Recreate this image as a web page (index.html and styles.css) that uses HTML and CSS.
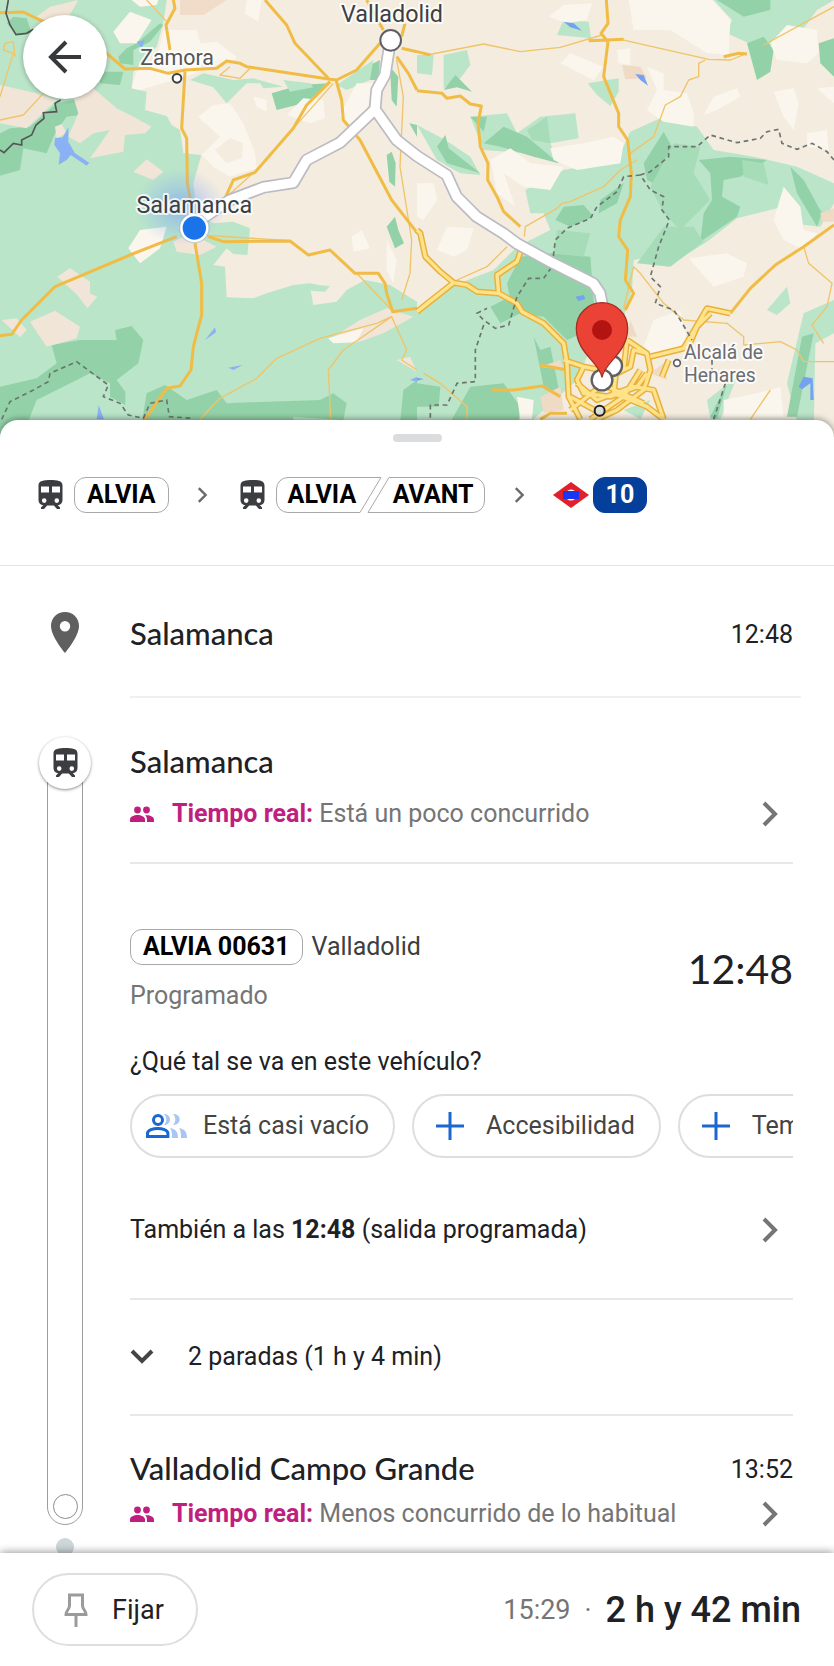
FILE: index.html
```html
<!DOCTYPE html>
<html lang="es">
<head>
<meta charset="utf-8">
<meta name="viewport" content="width=device-width, initial-scale=1">
<title>Salamanca – Ruta en transporte público</title>
<link rel="stylesheet" href="styles.css">
</head>
<body>
<svg class="defs" aria-hidden="true">
  <symbol id="train" viewBox="0 0 25 30">
    <path fill-rule="evenodd" d="M12.500 0C6 0 .5.500.500 5.500V20c0 3 2.200 5 4.800 5L3 27.500V29h3l3.200-3.500h6.600L19 29h3v-1.500L19.700 25c2.600 0 4.800-2 4.800-5V5.500C24.500.5 19 0 12.500 0zM3 6.500h8v6H3zm11 0h8v6h-8zM6.200 18.300a2.300 2.300 0 1 1 0 4.600 2.300 2.300 0 0 1 0-4.600zm12.600 0a2.300 2.300 0 1 1 0 4.600 2.300 2.300 0 0 1 0-4.600z"/>
  </symbol>
  <symbol id="people" viewBox="0 0 24 16">
    <circle cx="7.500" cy="4" r="3.400"/><circle cx="16.500" cy="4" r="3.400"/>
    <path d="M0 16v-2.500C0 10.500 4 9 7.500 9s7.500 1.500 7.500 4.500V16zM17 16v-2.500c0-1.800-.8-3.200-2-4.200 4-.7 9 1 9 4.200V16z"/>
  </symbol>
  <symbol id="chevron" viewBox="0 0 16 26"><path d="M2 2l11 11L2 24" fill="none" stroke="currentColor" stroke-width="4"/></symbol>
  <symbol id="plus" viewBox="0 0 28 28"><path d="M14 0v28M0 14h28" fill="none" stroke="currentColor" stroke-width="3"/></symbol>
</svg>

<div class="app">
  <header class="map">
    <svg class="map-art" viewBox="0 0 2502 1302" preserveAspectRatio="xMidYMin slice" role="img" aria-label="Mapa de la ruta">
      <defs>
        <radialGradient id="beam"><stop offset="0" stop-color="#7aa2f5" stop-opacity=".7"/><stop offset="1" stop-color="#8fb3f5" stop-opacity="0"/></radialGradient>
      </defs>
      <rect width="2502" height="1302" fill="#f3ecdf"/>
      <!-- west -->
      <g>
        <path fill="#bae5c9" d="M0 0H500L490 70 470 140 400 215 395 265 440 275 435 330 500 348 515 375 540 390 550 460 604 465 580 550 590 640 640 670 700 665 750 685 742 765 700 762 680 745 640 795 675 800 680 892 760 895 800 880 880 855 930 850 960 856 990 858 975 875 932 872 940 915 1010 905 1040 870 1095 840 1170 855 1251 905V1302H0Z"/>
        <g fill="#93d2a8">
          <path d="M20 70 40 50 80 55 95 100 50 105ZM0 400 30 385 90 380 170 310 220 300 262 300 240 345 200 350 165 400 140 460 70 445 60 510 0 527ZM300 215 370 215 360 255 300 250ZM355 170 380 145 410 130 480 70 490 75 450 125 400 150 400 195 360 190ZM815 280 900 255 985 250 930 300 890 315 830 330ZM1160 465 1175 455 1187 490 1185 560 1168 545ZM1160 680 1185 650 1195 690 1212 730 1185 745ZM0 1160 110 1135 170 1090 155 1035 240 1020 350 1020 345 990 395 978 430 1020 415 1090 350 1140 376 1175 376 1215 330 1190 330 1150 270 1120 190 1160 110 1200 70 1302H0ZM440 1180 495 1155 560 1200 650 1170 680 1210 800 1205 960 1200 1000 1180 1040 1210 1030 1260 880 1250V1302H420ZM1170 200 1195 230 1190 320 1175 300ZM1100 200 1140 180 1135 240 1100 240ZM1210 1170 1251 1140V1270H1200ZM1228 370 1251 375V410Z"/>
        </g>
        <path fill="#bae5c9" d="M610 220 700 240 760 235 850 260 790 265 780 250 740 250 680 310 640 262 570 240ZM1010 255 1120 180 1110 240 1040 270ZM850 240 930 250 940 262 870 275Z"/>
        <g fill="#f1e5d8">
          <path d="M165 380 185 372 200 400 170 415ZM215 275 275 260 310 290 350 325 400 350 455 380 435 400 375 405 370 455 270 475 330 390 280 400 240 430 205 410 235 340ZM0 255 110 280 170 300 80 385 0 370ZM400 515 440 478 490 515 460 540ZM172 830 210 805 270 845 270 880 292 890 262 925 232 885ZM5 960 50 955 80 990 60 1012ZM90 965 165 932 240 980 230 1015 140 1040ZM110 50 150 20 235 0 200 60 160 70ZM520 725 570 700 650 740 600 765 530 755ZM1080 960 1160 925 1240 950 1150 1000 1080 1025 985 1020ZM1190 1080 1230 1070 1251 1115Z"/>
          <path fill="#f0dcc8" d="M540 0H680L610 45 540 45Z"/>
        </g>
        <g fill="#faf6ee">
          <path d="M340 95 390 35 455 60 410 130 360 130ZM395 0H475L470 15 420 20ZM490 90 590 90 610 160 600 215 540 235 420 270 395 265 410 215 470 180ZM595 350 640 315 690 310 730 370 765 460 770 505 690 530 640 500 605 465 660 410ZM860 345 910 295 970 300 975 355 930 370ZM760 290 800 300 800 335 770 320ZM385 745 420 690 500 680 480 745 420 790ZM1020 345 1070 250 1130 250 1100 330 1040 380ZM740 0H785L775 65 735 40ZM1055 710 1085 690 1110 745 1060 755ZM1160 720 1190 780 1180 850 1160 810ZM600 130 650 125 710 170 700 185 620 200ZM985 1015 1090 985 1070 1027 1000 1030Z"/>
          <path fill="#f3ecdf" d="M645 450 690 415 730 430 725 475 680 490Z"/>
        </g>
        <g fill="#8bb1f5"><path d="M205 382 205 425 225 460 268 488 260 497 212 465 200 480 176 494 180 460 163 435 165 415 188 412ZM410 125 435 120 425 145ZM615 1020 645 982 648 997ZM685 1103 728 1095 700 1110ZM290 1258 296 1215 312 1258ZM1230 1140 1251 1130V1145Z"/></g>
        <g class="road-minor"><path d="M0 360 70 345 130 280M0 290 40 160 10 150 15 130 40 125 45 170M440 0 500 65M600 1258 660 1195 770 1135 830 1075 960 1015 1130 970 1175 950 1030 1050 985 1110 992 1258M1190 180 1210 290 1200 500 1235 720 1230 820 1205 900M1175 950 1220 1050 1205 1080 1251 1110M1070 820 1180 935M675 595 770 510M880 385 1000 250M690 200 660 225 720 235 750 205M600 705 870 722"/></g>
        <g class="road"><path d="M0 38 70 36 130 65 320 160 375 207 450 205 505 220 555 210 650 205 680 183 720 190 740 200 990 238 1010 240 1070 210 1140 130M520 0 525 25 498 75 510 150M555 215 545 385 560 415 562 550 580 650M795 0 860 75 885 130 985 235M990 245 920 315 880 385 765 517 700 540 675 595M1008 240 1025 300 1030 360 1080 420 1175 600 1251 698M0 1007 35 1003 65 960 165 860 390 765 530 710M585 730 605 850 605 945 580 1040 573 1110 540 1158 500 1165 435 1258M625 710 670 725 870 723 925 765 990 750 1065 820 1135 820 1155 850 1160 880 1178 935 1251 925M1190 170 1225 220 1251 270M1150 90 1100 0M1205 110 1215 70M1205 145 1251 155"/></g>
        <path class="frontier" d="M25 0 18 40 30 75 48 104 80 100 100 88M182 300 165 310 170 335 130 338 132 355 108 375 95 405 65 420 65 435 40 430 12 458 0 450"/>
        <path class="border" d="M5 1258 30 1205 100 1170 145 1145 150 1120 230 1085 325 1155 310 1190 360 1210 385 1245 430 1255 450 1210 500 1200 508 1250 580 1255"/>
      </g>
      <!-- east -->
      <g transform="translate(1251 0)">
        <g fill="#bae5c9">
          <path d="M890 0H1251L1200 30 1150 100 1060 140 995 130 930 100 945 60ZM420 105 440 60 515 65 522 115ZM0 165 50 165 45 225 0 220ZM80 165 150 150 160 195 130 235 80 265ZM512 250 605 235 605 275 580 318 540 285ZM160 350 270 340 300 400 370 350 475 340 485 415 400 430 425 490 330 460 200 450ZM0 375 85 420 160 470 190 525 130 520 60 480ZM325 570 440 510 600 480 640 395 740 350 840 380 890 450 1010 470 1140 500 1251 550V610L1210 680 1120 670 1125 610 1080 625 960 655 870 725 750 800 720 765 650 780 645 870 620 950 540 1000 480 1140 300 1302H0V940L100 860 230 810 300 740 400 690 380 640 340 640ZM1150 1302 1110 1150 1160 940 1251 900V1000L1195 1030 1190 1302ZM880 1258 870 1200 960 1130 910 1258ZM1050 930 1110 860 1120 910 1080 945ZM620 1230 700 1200 670 1258Z"/>
        </g>
        <g fill="#93d2a8">
          <path d="M80 270 115 225 165 275 120 262ZM160 350 210 350 200 395ZM200 430 260 380 330 410 425 490 350 470 250 440ZM60 440 85 405 95 445 190 520 90 490ZM680 490 740 395 770 450 820 500 760 530 740 565 690 540ZM845 480 940 470 1050 480 970 530 920 540 915 590 970 620 960 650 850 725 860 640 885 600 880 520ZM415 660 440 620 500 615 530 650 460 680ZM550 600 620 550 600 610 545 640ZM270 850 310 770 400 760 520 770 530 900 540 980 450 1020 380 950 300 940 280 900ZM220 920 280 890 310 940 250 970ZM900 0H1060V30L980 50ZM990 130 1040 110 1070 150 1060 215 1020 240ZM1205 130 1251 115V230L1210 190ZM1120 500 1160 540 1215 640 1200 680 1140 580ZM0 1150 70 1160 65 1220 0 1220ZM160 1160 260 1150 310 1220 300 1302H80ZM1155 1010 1190 1000 1140 1250H1110ZM350 1010 370 1050 400 1040 430 1190 380 1160ZM880 1250 930 1150 900 1258Z"/>
        </g>
        <path fill="#a7dcb8" d="M330 390 390 350 400 430 345 420ZM770 430 850 440 830 520 880 600 790 690 740 640 700 560ZM975 480 1040 490 1055 555 980 530ZM660 790 740 680 830 680 860 725 760 800ZM420 690 520 700 500 770 410 760Z"/>
        <g fill="#faf6ee">
          <path d="M395 50 440 15 525 10 510 60 450 70ZM635 0H885L940 60 935 165 870 160 760 90 650 90ZM1060 130 1110 75 1200 90 1205 160 1170 190 1080 180ZM430 190 460 160 560 200 530 240ZM600 150 640 145 640 195 605 190ZM690 200 740 220 740 270 810 280 830 340 830 380 740 365 690 330 720 270ZM860 345 890 290 960 265 970 290 900 330ZM1070 275 1130 265 1145 310 1130 390 1100 350ZM1170 400 1230 390 1235 450 1170 440ZM400 445 500 430 590 410 620 430 610 490 480 510 410 480ZM220 480 280 445 340 490 440 500 400 570 320 560 260 520 295 620 240 580ZM0 550 50 550 60 600 20 660 0 650ZM60 750 90 680 170 685 150 750 110 770ZM1070 660 1100 560 1150 620 1160 690 1200 700 1160 750 1100 720ZM815 775 930 760 990 790 980 830 890 860ZM680 1040 710 960 790 930 810 1020 770 1050 700 1060ZM1020 1180 1090 1160 1100 1250H920V1200ZM1200 265 1251 260V310ZM300 1190 350 1200 345 1258H310Z"/>
        </g>
        <g fill="#efdac5"><path d="M615 195 670 200 690 235 625 238ZM1210 640 1251 625V665L1215 665ZM370 1190 430 1160 440 1230 380 1240ZM640 960 660 1010 630 1010ZM370 1100 430 1080 440 1110ZM700 1120 740 1090 750 1140Z"/></g>
        <g fill="#76a1f1"><path d="M440 65 470 70 495 92 460 82ZM655 222 680 225 693 257 670 240ZM475 890 500 885 505 897 485 903ZM1145 1160 1160 1130 1187 1135 1190 1200 1180 1200 1180 1150 1155 1168ZM0 1133 20 1137 0 1142Z"/></g>
        <g class="road-minor"><path d="M30 165 200 132 310 155 430 142 555 105M610 118 875 178 940 180 990 160M1040 135 1251 20M865 180 845 190 845 230 815 240 790 290 745 315 710 410 640 460M660 480 610 510 560 560 460 605 435 610 420 625 325 680 322 710M270 740 210 800 120 840M620 925 650 800 670 820 740 910 800 960 930 970 980 1010 980 1035M980 1035 1090 1025 1140 1050 1160 1085 1251 1085M1160 740 1175 790 1245 850 1230 920 1185 975 1220 1030M1060 1170 1000 1258M20 1120 70 1150 150 1220 150 1258"/></g>
        <g class="road"><path d="M0 155 40 165M568 0 573 70 552 100 573 125 560 230 605 340 605 380 632 420 643 520 640 590 610 660 605 710 632 750 625 840 650 880 625 930M0 272 75 280 90 295 130 288 160 312 193 318 183 370 190 440 213 490 212 540 240 590 260 635 310 680M515 122 620 118M1251 675 1160 740 1075 795 1000 865 940 940M225 1170 290 1170 375 1158 430 1190M370 1258 400 1240 450 1240M730 1060 745 1060M370 1095 450 1110M920 170 965 160 990 162"/></g>
        <g class="highway">
          <path d="M0 690 10 700 25 770 70 815 110 848 150 855 180 875 245 880 300 910 315 935 380 970 440 1030 450 1090 455 1190 490 1258M0 935 110 848M245 880 240 825 300 785 312 750M440 1080 500 1100 550 1110 620 1110 630 1020M700 1070 800 1045 870 925 940 940M810 1050 840 980 880 940M735 1130 755 1080M630 1020 690 1060 700 1110 680 1170 600 1230 540 1258M460 1230 600 1120 640 1100 650 1050 690 1060M480 1150 540 1200 650 1160 710 1170 740 1258M500 1100 480 1140 500 1180 580 1190 660 1160 690 1120M520 1258 620 1190 670 1110M460 1190 560 1245M600 1090 590 1180 690 1220 740 1258M550 1150 680 1210"/>
        </g>
        <g class="highway-fill">
          <path d="M0 690 10 700 25 770 70 815 110 848 150 855 180 875 245 880 300 910 315 935 380 970 440 1030 450 1090 455 1190 490 1258M0 935 110 848M245 880 240 825 300 785 312 750M440 1080 500 1100 550 1110 620 1110 630 1020M700 1070 800 1045 870 925 940 940M810 1050 840 980 880 940M735 1130 755 1080M630 1020 690 1060 700 1110 680 1170 600 1230 540 1258M460 1230 600 1120 640 1100 650 1050 690 1060M480 1150 540 1200 650 1160 710 1170 740 1258M500 1100 480 1140 500 1180 580 1190 660 1160 690 1120M520 1258 620 1190 670 1110M460 1190 560 1245M600 1090 590 1180 690 1220 740 1258M550 1150 680 1210"/>
        </g>
        <path class="border" d="M1251 480 1230 455 1185 430 1140 448 1095 430 1085 388 1050 395 1030 415 960 428 880 405 840 440 755 440 755 470 700 515 670 525 700 570 740 590 735 630 757 660 725 740 700 830 730 860 715 910 770 930 790 960 825 1020M670 525 620 530 600 575 540 620 520 655 450 685 415 720 405 800 380 835 335 835 300 890 275 975 235 985 200 960 180 940 210 925M200 975 175 1050 175 1145 120 1150 90 1215 40 1215 40 1258M885 1080V1115M925 1150 890 1258"/>
      </g>
      <ellipse cx="540" cy="620" rx="135" ry="115" fill="url(#beam)"/>
      <g class="route-edge"><path d="M600 660 690 600 790 562 880 548 920 480 1020 428 1125 328 1130 270 1155 225 1170 130M1125 328 1190 420 1251 468 1340 525 1370 590 1430 650 1510 700 1550 730 1650 785 1730 825 1780 850 1800 880 1810 930"/></g>
      <g class="route-line"><path d="M600 660 690 600 790 562 880 548 920 480 1020 428 1125 328 1130 270 1155 225 1170 130M1125 328 1190 420 1251 468 1340 525 1370 590 1430 650 1510 700 1550 730 1650 785 1730 825 1780 850 1800 880 1810 930"/></g>
      <g fill="#fff" stroke="#5f6063">
        <circle cx="1172" cy="121" r="31" stroke-width="6"/>
        <circle cx="531" cy="235" r="13" stroke="#3c4043" stroke-width="6"/>
        <circle cx="1836" cy="1098" r="30" stroke-width="7"/>
        <circle cx="1806" cy="1140" r="31" stroke-width="7"/>
        <circle cx="1799" cy="1232" r="15" fill="#ddd" stroke="#222" stroke-width="6"/>
        <circle cx="2031" cy="1089" r="10" stroke-width="5"/>
      </g>
      <circle cx="583" cy="684" r="44" fill="#fff" stroke="#7c98b8" stroke-opacity=".4" stroke-width="4"/>
      <circle cx="583" cy="684" r="35" fill="#1a73e8"/>
      <path fill="#ea4335" stroke="#a92c20" stroke-width="4" d="M1806 1132C1798 1085 1729 1060 1729 985A77 77 0 0 1 1883 985C1883 1060 1814 1085 1806 1132Z"/>
      <circle cx="1806" cy="990" r="30" fill="#b31412"/>
      <g class="place">
        <text x="1176" y="67" class="place-city">Valladolid</text>
        <text x="531" y="194" class="place-town">Zamora</text>
        <text x="583" y="638" class="place-city">Salamanca</text>
        <text x="2052" y="1078" class="place-suburb">Alcalá de</text>
        <text x="2052" y="1147" class="place-suburb">Henares</text>
      </g>
    </svg>
    <button class="back" type="button" aria-label="Atrás">
      <svg viewBox="0 0 34 34" width="34" height="34"><path d="M33 17H3M18 2 3 17l15 15" fill="none" stroke="#37393c" stroke-width="4"/></svg>
    </button>
  </header>

  <main class="sheet">
    <div class="summary">
      <span class="handle"></span>
      <div class="legs">
        <span class="leg-item"><svg class="train"><use href="#train"/></svg><b class="line">ALVIA</b></span>
        <svg class="sep"><use href="#chevron"/></svg>
        <span class="leg-item">
          <svg class="train"><use href="#train"/></svg>
          <span class="pair">
            <svg class="pair-frame" viewBox="0 0 210 36" aria-hidden="true"><path d="M12 .5H105L84 35.500H12A11.500 11.500 0 0 1 .5 24V12A11.500 11.500 0 0 1 12 .5ZM113 .5H197A11.500 11.500 0 0 1 208.500 12V24A11.500 11.500 0 0 1 197 35.500H92Z" fill="#fff" stroke="#a8a8a8"/></svg>
            <b>ALVIA</b><b>AVANT</b>
          </span>
        </span>
        <svg class="sep"><use href="#chevron"/></svg>
        <span class="leg-item metro">
          <svg viewBox="0 0 36 26" width="36" height="26" role="img" aria-label="Metro"><path fill="#e0202b" d="M18 0 36 13 18 26 0 13z"/><circle cx="18" cy="13" r="5.500" fill="#fff"/><path fill="#1738f0" d="M10 9h16v8H10z"/></svg>
          <b class="line line-10">10</b>
        </span>
      </div>
    </div>

    <div class="itinerary">
      <section class="step origin">
        <div class="gutter"><svg viewBox="0 0 28 41" width="28" height="41"><path fill="#5f5f5f" fill-rule="evenodd" d="M14 0C6 0 0 6 0 14c0 10.500 14 27 14 27s14-16.500 14-27C28 6 22 0 14 0zm0 9a5.200 5.200 0 1 1 0 10.400A5.200 5.200 0 0 1 14 9z"/></svg></div>
        <div class="row origin-row"><h2>Salamanca</h2><time>12:48</time></div>
      </section>

      <section class="step ride">
        <div class="gutter rail">
          <span class="rail-badge"><svg class="train"><use href="#train"/></svg></span>
          <span class="rail-tube"><i class="rail-stop"></i></span>
        </div>
        <div class="details">
          <div class="board divided">
            <h2>Salamanca</h2>
            <button class="row live" type="button">
              <svg class="people"><use href="#people"/></svg>
              <span class="grow"><b>Tiempo real:</b> Está un poco concurrido</span>
              <svg class="go"><use href="#chevron"/></svg>
            </button>
          </div>
          <div class="service divided">
            <div class="row departure">
              <div class="grow">
                <p class="vehicle"><b class="line">ALVIA 00631</b> <span>Valladolid</span></p>
                <p class="status">Programado</p>
              </div>
              <time class="big">12:48</time>
            </div>
            <p class="question">¿Qué tal se va en este vehículo?</p>
            <div class="chips">
              <button type="button" class="chip chip-crowd">
                <svg viewBox="0 0 41 24" width="41" height="24"><g fill="#a9c6f3"><path d="M18 0c8 0 8 11 0 11 3-3 3-8 0-11zM27 0c9 0 9 11 0 11 3-3 3-8 0-11zM24 14c6 1 8 4 8 10h-6c0-5 0-7-2-10zM33 14c6 1 8 4 8 10h-6c0-5 0-7-2-10z"/></g><g fill="none" stroke="#1967d2" stroke-width="3"><circle cx="12" cy="6" r="4.500"/><path d="M1.500 22.500v-3c0-3.500 6-5 10.200-5s10.200 1.500 10.200 5v3z"/></g></svg>
                Está casi vacío
              </button>
              <button type="button" class="chip"><svg class="plus"><use href="#plus"/></svg>Accesibilidad</button>
              <button type="button" class="chip"><svg class="plus"><use href="#plus"/></svg>Temperatura</button>
            </div>
            <button class="row also" type="button">
              <span class="grow">También a las <b>12:48</b> (salida programada)</span>
              <svg class="go"><use href="#chevron"/></svg>
            </button>
          </div>
          <button class="row stops divided" type="button">
            <svg viewBox="0 0 24 16" width="24" height="16"><path d="M2 2l10 10L22 2" fill="none" stroke="#444" stroke-width="4"/></svg>
            2 paradas (1 h y 4 min)
          </button>
          <div class="arrive">
            <div class="row"><h2 class="grow">Valladolid Campo Grande</h2><time>13:52</time></div>
            <button class="row live" type="button">
              <svg class="people"><use href="#people"/></svg>
              <span class="grow"><b>Tiempo real:</b> Menos concurrido de lo habitual</span>
              <svg class="go"><use href="#chevron"/></svg>
            </button>
          </div>
        </div>
      </section>
      <div class="transfer"><i></i></div>
    </div>
  </main>

  <footer class="bar">
    <button class="pin" type="button">
      <svg viewBox="0 0 24 34" width="24" height="34"><path d="M5.500 2h13v10.500c0 4 3.500 5 3.500 9H2c0-4 3.500-5 3.500-9zM12 22v12" fill="none" stroke="#999c9b" stroke-width="3"/></svg>
      Fijar
    </button>
    <p class="total"><time>15:29</time><span>·</span><strong>2 h y 42 min</strong></p>
  </footer>
</div>
</body>
</html>
```
FILE: styles.css
```css
* { box-sizing: border-box; }
body { margin: 0; font: 25px/32px Roboto, sans-serif; color: #202124; background: #fff; }
h2, p { margin: 0; font-weight: 400; }
h2 { padding-bottom: 4px; font: 500 31px/36px Lato, Roboto, sans-serif; }
button { font: inherit; color: inherit; background: none; border: 0; padding: 0; text-align: left; cursor: pointer; }
svg { flex: none; display: block; }
b { font-weight: 700; }
.defs { position: absolute; width: 0; height: 0; }

.app { display: flex; flex-direction: column; height: 100vh; overflow: hidden; }

/* Map */
.map { position: relative; flex: none; }
.map-art { width: 100%; height: 434px; }
.road { fill: none; stroke: #f1bc45; stroke-width: 9; stroke-linejoin: round; }
.road-minor { fill: none; stroke: #f0c468; stroke-width: 4; stroke-linejoin: round; }
.highway { fill: none; stroke: #e9b13b; stroke-width: 19; stroke-linejoin: round; }
.highway-fill { fill: none; stroke: #ffe38b; stroke-width: 10; stroke-linejoin: round; }
.frontier { fill: none; stroke: #555; stroke-width: 5; }
.border { fill: none; stroke: #6c756e; stroke-width: 5; stroke-dasharray: 14 11; }
.route-edge { fill: none; stroke: #bcbac2; stroke-width: 38; stroke-linejoin: round; }
.route-line { fill: none; stroke: #fff; stroke-width: 28; stroke-linejoin: round; }
.place { font-family: Roboto, sans-serif; paint-order: stroke; stroke: #fff; stroke-opacity: .8; stroke-width: 12; stroke-linejoin: round; fill: #3c4043; }
.place-city { font-size: 70px; text-anchor: middle; }
.place-town { font-size: 64px; text-anchor: middle; fill: #555; }
.place-suburb { font-size: 58px; fill: #6b6d70; }
.back { position: absolute; left: 23px; top: 15px; width: 84px; height: 84px; border-radius: 50%; background: #fff; box-shadow: 0 1px 5px rgba(0, 0, 0, .3); display: grid; place-items: center; }

/* Bottom sheet */
.sheet { position: relative; flex: 1; min-height: 0; margin-top: -14px; display: flex; flex-direction: column; background: #fff; border-radius: 18px 18px 0 0; box-shadow: 0 -1px 6px rgba(0, 0, 0, .4); }
.summary { flex: none; padding: 14px 34px 52px; border-bottom: 1px solid #e3e3e3; }
.handle { display: block; width: 49px; height: 8px; margin: 0 auto 35px; border-radius: 4px; background: #dadcde; }
.legs { display: flex; align-items: center; }
.legs .train { margin-left: 4px; }
.leg-item { display: flex; align-items: center; gap: 11px; }
.metro { gap: 4px; }
.train { width: 25px; height: 30px; fill: #3c3d40; }
.sep { width: 11px; height: 16px; margin: 0 28px; color: #6b6b6b; }
.line { display: inline-block; height: 36px; line-height: 34px; padding: 0 12px; border: 1px solid #a8a8a8; border-radius: 12px; color: #000; }
.line-10 { background: #04409b; border-color: #04409b; color: #fff; }
.pair { position: relative; display: flex; width: 210px; height: 36px; line-height: 36px; padding: 0 12px; justify-content: space-between; color: #000; }
.pair-frame { position: absolute; inset: 0; width: 100%; height: 100%; }
.pair b { position: relative; }

.itinerary { flex: 1; min-height: 0; overflow-y: auto; scrollbar-width: none; }
.step { display: grid; grid-template-columns: 130px 1fr; }
.gutter { display: flex; flex-direction: column; align-items: center; }
.row { display: flex; align-items: center; width: 100%; }
.grow { flex: 1; }
.divided { border-bottom: 2px solid #e8e8e8; }
.origin { align-items: center; padding-right: 33px; }
.origin-row { height: 132px; padding: 8px 8px 0 0; justify-content: space-between; border-bottom: 2px solid #f0f0f0; }

.ride { padding-right: 41px; }
.rail { padding: 39px 0 7px; }
.rail-badge { position: relative; z-index: 1; display: grid; place-items: center; width: 52px; height: 52px; margin-bottom: -26px; border-radius: 50%; background: #fff; box-shadow: 0 1px 3px rgba(0, 0, 0, .45); }
.rail-tube { flex: 1; display: flex; align-items: flex-end; justify-content: center; width: 36px; padding-bottom: 5px; border: 1px solid #9d9d9d; border-radius: 18px; }
.rail-stop { width: 25px; height: 25px; border: 1px solid #8c8c8c; border-radius: 50%; }
.details { min-width: 0; padding-bottom: 2px; }
.board { padding: 45px 0 32px; }
.live { height: 32px; color: #757575; }
.board .live { margin-top: 15px; }
.live b { color: #c01f80; }
.people { width: 24px; height: 16px; margin-right: 18px; fill: #c01f80; }
.go { width: 16px; height: 26px; margin-right: 15px; color: #757575; }
.service { padding: 65px 0 52px; }
.vehicle { display: flex; align-items: center; gap: 9px; height: 36px; color: #3c4043; }
.status { margin-top: 15px; color: #757575; }
.big { padding-bottom: 4px; font: 400 41px/48px Lato, sans-serif; }
.question { margin-top: 34px; }
.chips { display: flex; gap: 17px; margin-top: 16px; overflow: hidden; }
.chip { flex: none; display: flex; align-items: center; gap: 22px; height: 64px; padding: 0 24px 0 22px; border: 2px solid #dedede; border-radius: 32px; color: #444; white-space: nowrap; }
.chip-crowd { gap: 16px; padding-left: 14px; }
.plus { width: 28px; height: 28px; color: #1a67d2; }
.also { margin-top: 56px; }
.stops { height: 116px; gap: 34px; }
.arrive { padding-top: 34px; }
.arrive .live { margin-top: 8px; }
.transfer { display: grid; justify-items: center; width: 130px; padding-top: 6px; }
.transfer i { width: 18px; height: 18px; border-radius: 50%; background: #cdd6d9; }

/* Footer */
.bar { position: relative; flex: none; display: flex; align-items: center; justify-content: space-between; padding: 20px 33px 20px 32px; background: #fff; box-shadow: 0 -1px 8px rgba(0, 0, 0, .4); }
.pin { display: flex; align-items: center; gap: 24px; height: 73px; padding: 0 32px 0 30px; border: 2px solid #dedede; border-radius: 37px; font-size: 27px; }
.total { display: flex; align-items: center; gap: 14px; color: #757575; font-size: 27px; }
.total strong { font: 500 36px/44px Roboto, sans-serif; color: #202124; }
```
